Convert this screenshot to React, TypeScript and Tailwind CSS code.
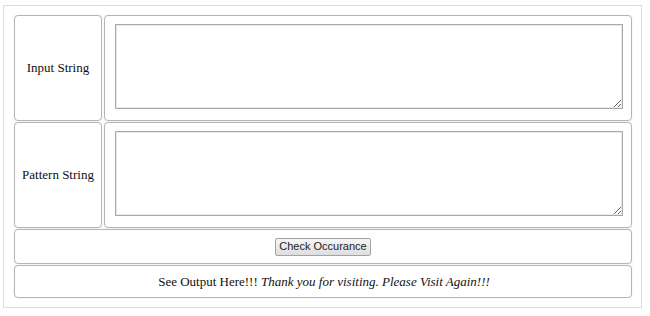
export default function App() {
  const serif = { fontFamily: '"Liberation Serif", "Times New Roman", serif' };

  return (
    <main className="min-h-screen bg-white pl-[3px] pt-[5px]" style={serif}>
      <div className="flex w-[639px] h-[303px] flex-col gap-[1px] border border-[#dcdcdc] pl-[10px] pr-[9px] pt-[9px] text-[13px] text-[#111]">
        {/* Input rows */}
        {[
          { label: "Input String" },
          { label: "Pattern String" },
        ].map((row) => (
          <div key={row.label} className="flex h-[106px] gap-[2px]">
            <div className="flex w-[88px] items-center justify-center rounded-[4px] border border-[#b5b5b5] shadow-[0_0_1px_#ccc]">
              {row.label}
            </div>
            <div className="flex-1 rounded-[4px] border border-[#b5b5b5] pl-[10px] pt-[8px] shadow-[0_0_1px_#ccc]">
              <textarea className="block h-[85px] w-[508px] border border-[#a9a9a9] bg-white shadow-[inset_0_0_0_1px_#e8e8e8] outline-none" />
            </div>
          </div>
        ))}

        {/* Button row */}
        <div className="flex h-[35px] items-center justify-center rounded-[4px] border border-[#b5b5b5] shadow-[0_0_1px_#ccc]">
          <button
            className="h-[18px] w-[96px] whitespace-nowrap rounded-[2px] border border-[#a3a3a3] bg-gradient-to-b from-[#f6f6f6] to-[#dedede] p-0 text-[11px] leading-none text-[#222]"
            style={{ fontFamily: '"Liberation Sans", Arial, sans-serif' }}
          >
            Check Occurance
          </button>
        </div>

        {/* Output row */}
        <div className="flex h-[33px] items-center justify-center rounded-[4px] border border-[#b5b5b5] shadow-[0_0_1px_#ccc]">
          <span className="pl-[2px]">
            See Output Here!!! <i>Thank you for visiting. Please Visit Again!!!</i>
          </span>
        </div>
      </div>
    </main>
  );
}
